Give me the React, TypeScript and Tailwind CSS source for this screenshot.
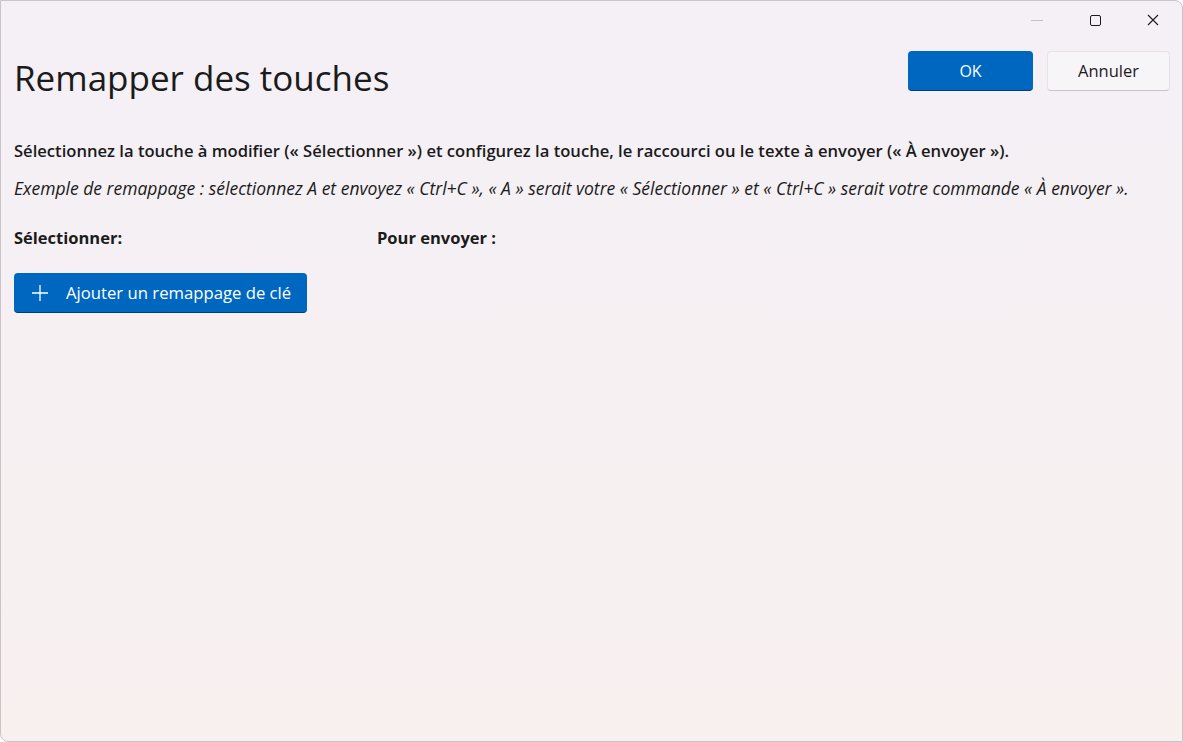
import React from "react";

export default function App() {
  const font = { fontFamily: '"Segoe UI", "Open Sans", "Noto Sans", sans-serif' };
  return (
    <div
      className="w-[1183px] h-[742px] overflow-hidden relative bg-gradient-to-b from-[#f4f0f6] to-[#f8f0ef] border border-[#c8c4c8] rounded-tr-[8px] rounded-bl-[8px] text-[#1b1b1b]"
      style={font}
    >
      {/* title bar */}
      <div className="flex justify-end h-[38px]">
        <div className="w-[58px] flex items-center justify-center">
          <div className="w-[12px] h-px bg-[#c4c0c4]" />
        </div>
        <div className="w-[58px] flex items-center justify-center">
          <div className="w-[11px] h-[11px] border border-[#1b1b1b] rounded-[2px]" />
        </div>
        <div className="w-[58px] flex items-center justify-center">
          <svg width="12" height="12" viewBox="0 0 12 12" stroke="#1b1b1b" strokeWidth="1.1">
            <path d="M1 1L11 11M11 1L1 11" />
          </svg>
        </div>
      </div>
      <div className="flex items-start justify-between pl-[13px] pr-[12px]">
        <h1 className="text-[35px] leading-[44px] mt-[17px] font-normal">Remapper des touches</h1>
        <div className="flex gap-[14px] mt-[12px]">
          <button className="w-[125px] h-[40px] rounded-[4px] bg-[#0067c0] border-b border-[#003e73] text-white text-[16px]">OK</button>
          <button className="w-[123px] h-[40px] rounded-[4px] bg-[#f8f5f9] border border-[#e6e2e6] border-t-dotted border-b-[#c8c4c8] text-[#1b1b1b] text-[16.5px]">Annuler</button>
        </div>
      </div>
      <div className="px-[13px] mt-[41px]">
        <p className="text-[16.6px] font-semibold leading-[20px] whitespace-nowrap">
          Sélectionnez la touche à modifier (« Sélectionner ») et configurez la touche, le raccourci ou le texte à envoyer (« À envoyer »).
        </p>
        <p className="text-[17.5px] italic leading-[20px] mt-[17px] whitespace-nowrap">
          Exemple de remappage : sélectionnez A et envoyez « Ctrl+C », « A » serait votre « Sélectionner » et « Ctrl+C » serait votre commande « À envoyer ».
        </p>
        <div className="flex mt-[30px] text-[16.5px] font-bold leading-[20px]">
          <div className="w-[363px]">Sélectionner:</div>
          <div>Pour envoyer :</div>
        </div>
        <button className="mt-[25px] h-[40px] w-[293px] rounded-[4px] bg-[#0067c0] border-b border-[#003e73] text-white text-[16.7px] flex items-center pl-[17px] gap-[17px]">
          <svg width="18" height="18" viewBox="0 0 18 18" stroke="white" strokeWidth="1.3">
            <path d="M9 1V17M1 9H17" />
          </svg>
          <span>Ajouter un remappage de clé</span>
        </button>
      </div>
    </div>
  );
}
